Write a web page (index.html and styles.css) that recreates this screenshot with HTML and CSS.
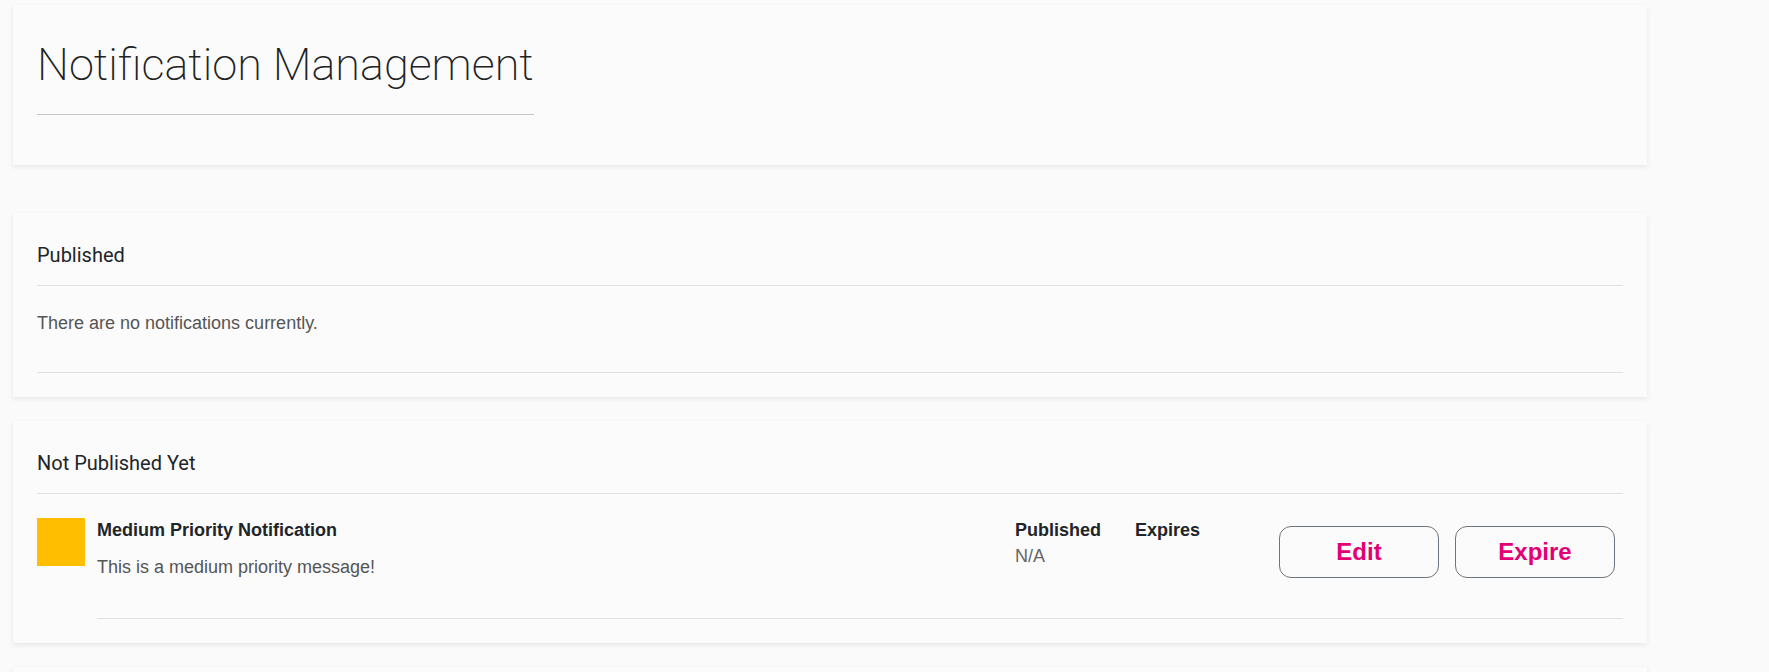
FILE: index.html
```html
<!DOCTYPE html>
<html lang="en">
<head>
    <meta charset="UTF-8">
    <meta name="viewport" content="width=device-width, initial-scale=1.0">
    <title>Notification Management</title>
    <link rel="stylesheet" href="styles.css">
</head>
<body>
    <div class="pagina">
        <div class="cartao cartao-titulo">
            <h1>Notification Management</h1>
        </div>

        <div class="cartao">
            <h2 class="secao">Published</h2>
            <p class="vazio">There are no notifications currently.</p>
        </div>

        <div class="cartao">
            <h2 class="secao">Not Published Yet</h2>
            <div class="notificacao">
                <div class="prioridade media"></div>
                <div class="corpo">
                    <div class="info">
                        <div class="nome">Medium Priority Notification</div>
                        <div class="mensagem">This is a medium priority message!</div>
                    </div>
                    <div class="datas">
                        <div class="coluna">
                            <div class="rotulo">Published</div>
                            <div class="valor">N/A</div>
                        </div>
                        <div class="coluna">
                            <div class="rotulo">Expires</div>
                            <div class="valor"></div>
                        </div>
                    </div>
                    <div class="acoes">
                        <button>Edit</button>
                        <button>Expire</button>
                    </div>
                </div>
            </div>
        </div>

        <!-- proxima secao, fora da tela -->
        <div class="cartao cartao-vazio"></div>
    </div>
</body>
</html>
```

FILE: styles.css
```css
body {
    margin: 0;
    background-color: #fafafa;
    font-family: "Liberation Sans", Arial, sans-serif;
    color: #212529;
}
.pagina {
    width: 1634px;
    padding: 5px 0 0 13px;
}
.cartao {
    background-color: #fbfbfb;
    padding: 24px;
    margin-bottom: 24px;
    box-shadow: 0 2px 5px rgba(0, 0, 0, 0.08);
}
.cartao-titulo {
    margin-bottom: 48px;
}
.cartao-vazio {
    height: 120px;
}
h1 {
    width: fit-content;
    margin: 10px 0 26px;
    padding-bottom: 23px;
    font-family: Roboto, sans-serif;
    font-weight: 200;
    font-size: 45px;
    line-height: 52px;
    color: #222;
    border-bottom: 1px solid #c4c4c4;
}
.secao {
    margin: 0;
    padding: 6px 0 18px;
    font-family: Roboto, sans-serif;
    font-weight: 400;
    font-size: 20px;
    line-height: 24px;
    border-bottom: 1px solid #dee2e6;
}
.vazio {
    margin: 0;
    padding: 27px 0 38px;
    font-size: 18px;
    line-height: 21px;
    color: #555;
    border-bottom: 1px solid #dee2e6;
}
.notificacao {
    display: flex;
    align-items: flex-start;
    padding-top: 24px;
}
.prioridade {
    width: 48px;
    height: 48px;
    flex-shrink: 0;
}
.media {
    background-color: #ffbf00;
}
.corpo {
    flex: 1;
    display: flex;
    align-items: flex-start;
    margin-left: 12px;
    padding-bottom: 39px;
    border-bottom: 1px solid #dee2e6;
}
.info {
    flex: 1;
}
.nome {
    font-weight: bold;
    font-size: 18px;
    line-height: 24px;
}
.mensagem {
    margin-top: 13px;
    font-size: 18px;
    line-height: 24px;
    color: #555;
}
.datas {
    display: grid;
    grid-template-columns: 120px 136px;
}
.rotulo {
    font-weight: bold;
    font-size: 18px;
    line-height: 24px;
}
.valor {
    margin-top: 2px;
    font-size: 18px;
    line-height: 24px;
    color: #666;
}
.acoes {
    display: flex;
}
button {
    width: 160px;
    height: 52px;
    margin: 8px 8px 0;
    background-color: transparent;
    border: 1px solid #6c757d;
    border-radius: 12px;
    font-family: "Liberation Sans", Arial, sans-serif;
    font-weight: bold;
    font-size: 24px;
    color: #e20074;
    cursor: pointer;
}
```
